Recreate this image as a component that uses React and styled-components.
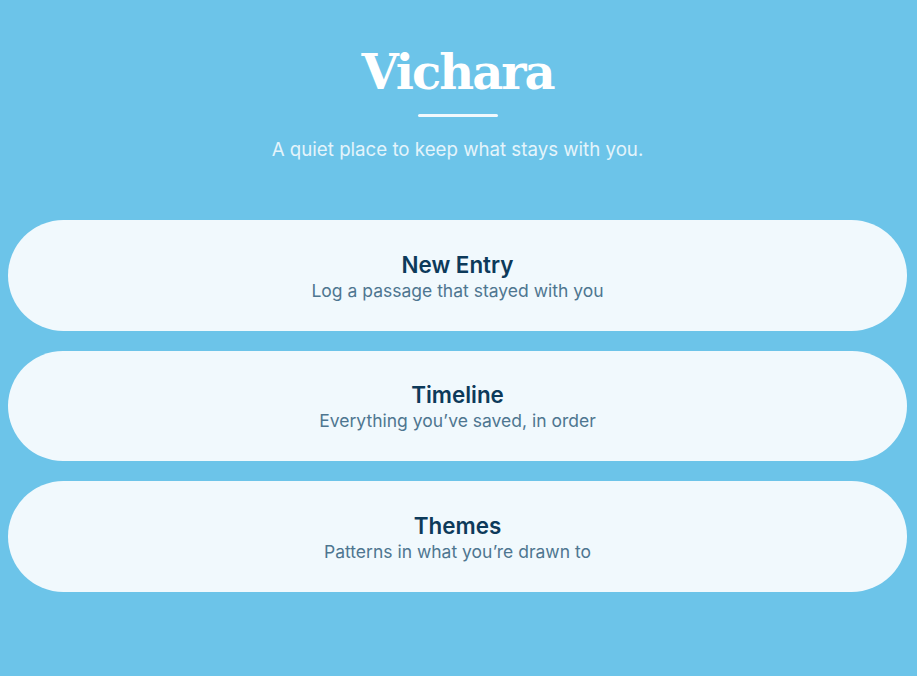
import styled, { createGlobalStyle } from "styled-components";

const GlobalStyle = createGlobalStyle`
  html, body {
    background: #6cc4e9;
  }
  body {
    margin: 8px;
    font-family: Inter, "Noto Sans", sans-serif;
  }
`;

const items = [
  { title: "New Entry", text: "Log a passage that stayed with you" },
  { title: "Timeline", text: "Everything you’ve saved, in order" },
  { title: "Themes", text: "Patterns in what you’re drawn to" },
];

const App = () => {
  return (
    <Page>
      <GlobalStyle />
      <Header>
        <Title>Vichara</Title>
        <Rule />
        <Tagline>A quiet place to keep what stays with you.</Tagline>
      </Header>
      <Menu>
        {items.map((item) => (
          <Card key={item.title}>
            <CardTitle>{item.title}</CardTitle>
            <CardText>{item.text}</CardText>
          </Card>
        ))}
      </Menu>
    </Page>
  );
};

const Page = styled.main`
  display: flex;
  flex-direction: column;
  padding-right: 2px;
`;

const Header = styled.header`
  display: flex;
  flex-direction: column;
  align-items: center;
  padding-top: 29px;
`;

const Title = styled.h1`
  margin: 0;
  font-family: "DejaVu Serif", "Liberation Serif", serif;
  font-weight: 700;
  font-size: 48px;
  line-height: 70px;
  color: #ffffff;
  letter-spacing: -2px;
`;

const Rule = styled.div`
  width: 80px;
  height: 3px;
  margin-top: 7px;
  background: #f1f9fd;
  border-radius: 2px;
`;

const Tagline = styled.p`
  margin: 21px 0 0;
  font-size: 18.7px;
  line-height: 24px;
  color: #e4f4fb;
`;

const Menu = styled.nav`
  display: flex;
  flex-direction: column;
  gap: 20px;
  margin-top: 58px;
`;

const Card = styled.div`
  height: 110.5px;
  border-radius: 56px;
  background: #f1f9fd;
  display: flex;
  flex-direction: column;
  align-items: center;
  justify-content: center;
  padding-top: 3px;
  box-sizing: border-box;
`;

const CardTitle = styled.h2`
  margin: 0;
  font-size: 22.4px;
  line-height: 28px;
  font-weight: 600;
  color: #0d3a5a;
`;

const CardText = styled.p`
  margin: 0;
  font-size: 17.5px;
  line-height: 24px;
  color: #4e7690;
`;

export default App;
